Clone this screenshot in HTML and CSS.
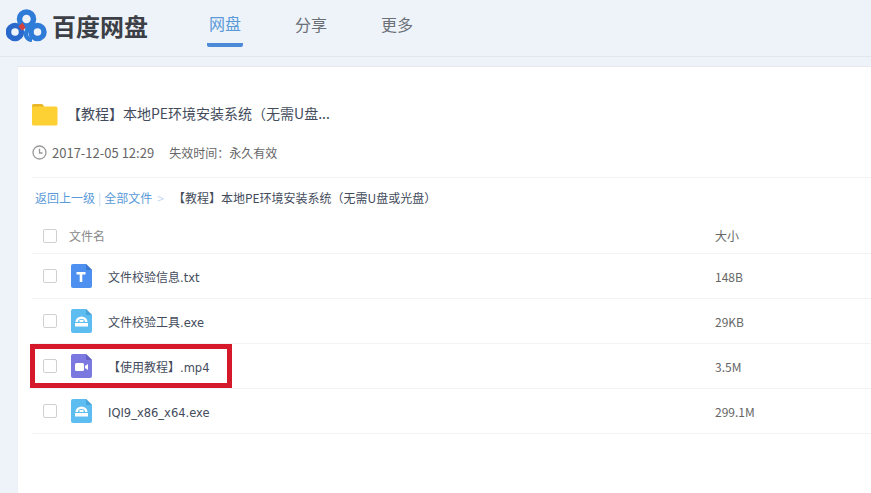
FILE: index.html
```html
<!DOCTYPE html>
<html lang="zh-CN">
<head>
<meta charset="utf-8">
<title>百度网盘</title>
<link rel="stylesheet" href="styles.css">
</head>
<body>
<header class="top">
  <div class="brand">
    <svg class="logo" width="42" height="33" viewBox="0 0 42 33">
      <circle cx="9" cy="23" r="6.500" fill="none" stroke="#2a68cc" stroke-width="5.500"/>
      <path d="M27 12 C26 17 21 19 20 24 C19.500 28 22 30.500 26 31" fill="none" stroke="#2f7bd8" stroke-width="4.500"/>
      <circle cx="20.500" cy="10" r="7" fill="none" stroke="#2f7bd8" stroke-width="5.500"/>
      <circle cx="31.500" cy="23" r="6.500" fill="none" stroke="#2f7bd8" stroke-width="5.500"/>
      <path d="M12.500 17.500 L16.500 13.500 L19.500 19 L16 21.500 Z" fill="#d8403c"/>
    </svg>
    <span class="brand-name">百度网盘</span>
  </div>
  <nav class="nav">
    <a class="nav-item active">网盘</a>
    <a class="nav-item">分享</a>
    <a class="nav-item">更多</a>
  </nav>
</header>
<main class="card">
  <section class="share">
    <div class="share-title">
      <svg class="folder" width="27" height="23" viewBox="0 0 27 23">
        <path d="M1 3 Q1 1 3 1 H10 Q11.500 1 12 2 L13 3.500 H25 Q26.500 3.500 26.500 5 V21 Q26.500 22.500 25 22.500 H2.500 Q1 22.500 1 21 Z" fill="#fdd033"/>
        <path d="M1 3 Q1 1 3 1 H10 Q11.500 1 12 2 L13 3.500 H1 Z" fill="#e9b62a"/>
      </svg>
      <h1 class="title-text">【教程】本地PE环境安装系统（无需U盘...</h1>
    </div>
    <div class="meta">
      <svg class="clock" width="15" height="15" viewBox="0 0 15 15">
        <circle cx="7.500" cy="7.500" r="6.500" fill="none" stroke="#999" stroke-width="1.300"/>
        <path d="M7.500 3.800 V8 H10.500" fill="none" stroke="#999" stroke-width="1.300"/>
      </svg>
      <span class="meta-date">2017-12-05 12:29</span>
      <span class="meta-expire">失效时间：永久有效</span>
    </div>
  </section>
  <div class="crumbs">
    <a class="crumb-link">返回上一级</a><span class="crumb-bar">|</span><a class="crumb-link">全部文件</a><span class="crumb-arrow">&gt;</span><span class="crumb-current">【教程】本地PE环境安装系统（无需U盘或光盘）</span>
  </div>
  <div class="row head">
    <span class="check"></span>
    <span class="head-name">文件名</span>
    <span class="size">大小</span>
  </div>
  <div class="row">
    <span class="check"></span>
    <svg class="ficon" width="21" height="24" viewBox="0 0 21 24">
      <path d="M2 0 H15 L21 6 V22 Q21 24 19 24 H2 Q0 24 0 22 V2 Q0 0 2 0 Z" fill="#4d90f0"/>
      <path d="M15 0 L21 6 H16 Q15 6 15 5 Z" fill="#3b78d0"/>
      <path d="M5.500 8 H14.500 V10.500 H11.300 V18 H8.700 V10.500 H5.500 Z" fill="#fff"/>
    </svg>
    <span class="name">文件校验信息<span class="latin">.txt</span></span>
    <span class="size">148B</span>
  </div>
  <div class="row">
    <span class="check"></span>
    <svg class="ficon" width="21" height="24" viewBox="0 0 21 24">
      <path d="M2 0 H15 L21 6 V22 Q21 24 19 24 H2 Q0 24 0 22 V2 Q0 0 2 0 Z" fill="#5dbcf0"/>
      <path d="M15 0 L21 6 H16 Q15 6 15 5 Z" fill="#48a3d8"/>
      <path d="M4.500 13 A6 5.500 0 0 1 16.500 13 H14 A3.500 3 0 0 0 7 13 Z" fill="#fff"/>
      <path d="M4 14 H17 V17.500 H4 Z M8.500 11 H12.500 V13 H8.500 Z" fill="#fff"/>
    </svg>
    <span class="name">文件校验工具<span class="latin">.exe</span></span>
    <span class="size">29KB</span>
  </div>
  <div class="row">
    <span class="check"></span>
    <svg class="ficon" width="21" height="24" viewBox="0 0 21 24">
      <path d="M2 0 H15 L21 6 V22 Q21 24 19 24 H2 Q0 24 0 22 V2 Q0 0 2 0 Z" fill="#7b78e0"/>
      <path d="M15 0 L21 6 H16 Q15 6 15 5 Z" fill="#6461c4"/>
      <rect x="4" y="9" width="9" height="8" rx="1.500" fill="#fff"/>
      <path d="M14 12 L17 10 V16 L14 14 Z" fill="#fff"/>
    </svg>
    <span class="name">【使用教程】<span class="latin">.mp4</span></span>
    <span class="size">3.5M</span>
    <span class="highlight"></span>
  </div>
  <div class="row">
    <span class="check"></span>
    <svg class="ficon" width="21" height="24" viewBox="0 0 21 24">
      <path d="M2 0 H15 L21 6 V22 Q21 24 19 24 H2 Q0 24 0 22 V2 Q0 0 2 0 Z" fill="#5dbcf0"/>
      <path d="M15 0 L21 6 H16 Q15 6 15 5 Z" fill="#48a3d8"/>
      <path d="M4.500 13 A6 5.500 0 0 1 16.500 13 H14 A3.500 3 0 0 0 7 13 Z" fill="#fff"/>
      <path d="M4 14 H17 V17.500 H4 Z M8.500 11 H12.500 V13 H8.500 Z" fill="#fff"/>
    </svg>
    <span class="name"><span class="latin">IQI9_x86_x64.exe</span></span>
    <span class="size">299.1M</span>
  </div>
</main>
</body>
</html>
```
FILE: styles.css
```css
* { box-sizing: border-box; }
html, body { height: 100%; }
body {
  margin: 0;
  overflow: hidden;
  display: flex;
  flex-direction: column;
  background: #eef3f9;
  color: #444c5c;
  font-family: "Noto Sans CJK SC", "Liberation Sans", sans-serif;
  font-size: 12px;
}
.top {
  height: 57px;
  flex: none;
  display: flex;
  border-bottom: 1px solid #e2e7ef;
  padding-left: 6px;
}
.brand { display: flex; align-items: center; height: 50px; }
.logo { display: block; }
.brand-name {
  margin-left: 4px;
  font-size: 24px;
  font-weight: 700;
  color: #3c3f46;
}
.nav { display: flex; margin-left: 61px; gap: 54px; }
.nav-item {
  height: 47px;
  width: 32px;
  font-size: 16px;
  line-height: 48px;
  color: #6a6f78;
  white-space: nowrap;
}
.nav-item.active {
  color: #5a9ad8;
  border-bottom: 4px solid #4a8ad6;
  border-radius: 0 0 2px 2px;
  margin: 0 -2px;
  width: 36px;
  padding: 0 2px;
  line-height: 46px;
}
.card {
  flex: 1;
  margin: 9px 0 0 17px;
  background: #fff;
  border-top: 1px solid #e6e8ec;
  border-left: 1px solid #edf0f4;
  padding-left: 14px;
}
.share {
  height: 111px;
  border-bottom: 1px solid #f2f3f5;
  padding-top: 36px;
}
.share-title { display: flex; align-items: center; height: 23px; }
.folder { display: block; margin-left: -1px; }
.title-text {
  margin: 0 0 4px 9px;
  font-size: 14px;
  font-weight: 400;
  color: #444c5c;
  white-space: nowrap;
}
.meta {
  display: flex;
  align-items: center;
  margin-top: 17px;
  color: #666;
  white-space: nowrap;
}
.clock { display: block; }
.meta-date { margin: 0 15px 0 5px; font-size: 13px; }
.meta-expire { font-family: "Noto Sans CJK TC", "Noto Sans CJK SC", sans-serif; }
.crumbs {
  height: 40px;
  padding: 10px 0 0 3px;
  line-height: 20px;
  white-space: nowrap;
}
.crumb-link { color: #5a9ad8; }
.crumb-bar { color: #c4d8f0; margin: 0 3px; }
.crumb-arrow { color: #c5d8f3; margin: 0 9px 0 5px; }
.crumb-current { color: #444c5c; }
.row {
  position: relative;
  height: 45px;
  display: flex;
  align-items: center;
  border-bottom: 1px solid #f2f3f5;
}
.head { height: 36px; color: #888; }
.check {
  flex: none;
  width: 14px;
  height: 14px;
  margin-left: 11px;
  border: 1px solid #d0d0d0;
  border-radius: 2px;
  background: #fff;
}
.head-name { margin-left: 12px; }
.ficon { flex: none; display: block; margin-left: 14px; }
.name {
  margin-left: 16px;
  font-size: 12px;
  color: #444c5c;
  white-space: nowrap;
}
.latin {
  font-family: "DejaVu Sans", sans-serif;
  font-size: 11.5px;
}
.size {
  position: absolute;
  left: 683px;
  color: #666;
}
.highlight {
  position: absolute;
  left: -2px;
  top: 0;
  width: 202px;
  height: 44px;
  border: 5px solid #d5182a;
}
```
